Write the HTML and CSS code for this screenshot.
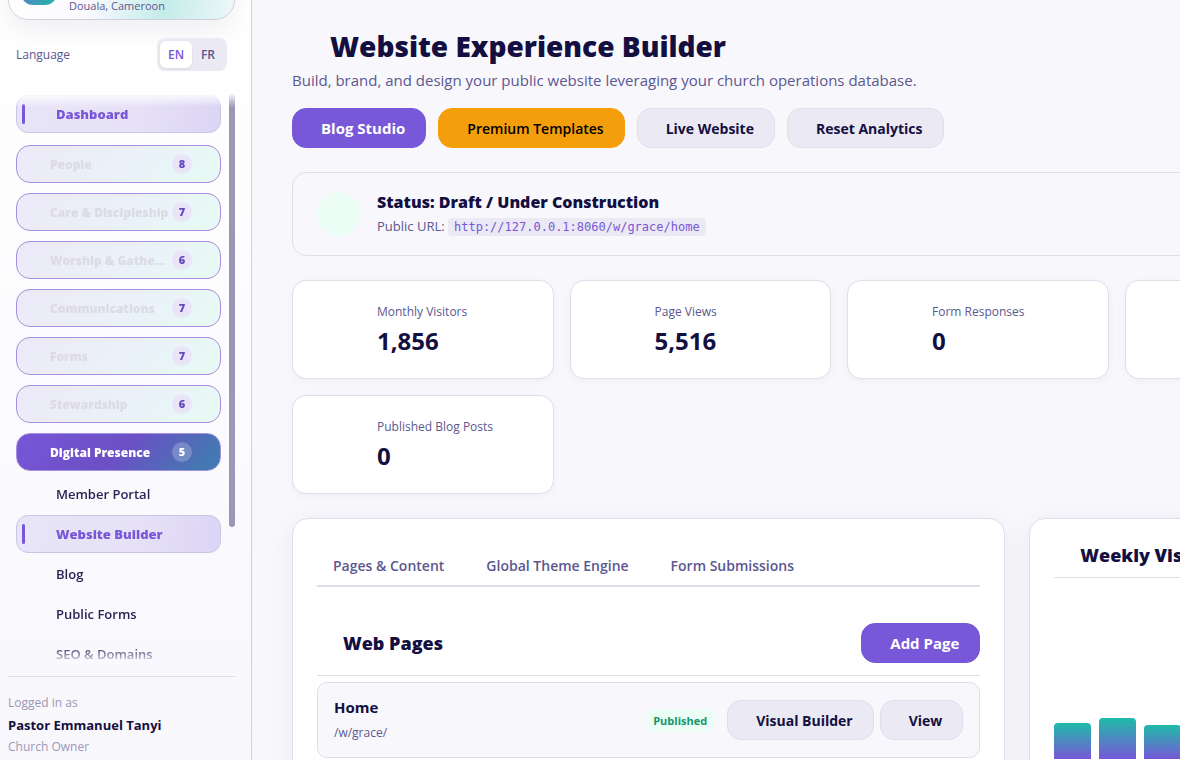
FILE: index.html
```html
<!DOCTYPE html>
<html lang="en">
<head>
    <meta charset="UTF-8">
    <meta name="viewport" content="width=device-width, initial-scale=1.0">
    <title>Website Experience Builder</title>
    <link rel="stylesheet" href="styles.css">
</head>
<body>

    <div class="app">
        <aside class="sidebar">
            <div class="brand-card">
                <div class="brand-logo"></div>
                <div class="brand-place">Douala, Cameroon</div>
            </div>

            <div class="language-row">
                <span>Language</span>
                <div class="language-toggle">
                    <button type="button" class="active">EN</button>
                    <button type="button">FR</button>
                </div>
            </div>

            <nav class="side-nav">
                <a href="#" class="nav-link active first">Dashboard</a>
                <button type="button" class="nav-group"><span class="nav-label">People</span><span class="count">8</span></button>
                <button type="button" class="nav-group"><span class="nav-label">Care &amp; Discipleship</span><span class="count">7</span></button>
                <button type="button" class="nav-group"><span class="nav-label">Worship &amp; Gathe...</span><span class="count">6</span></button>
                <button type="button" class="nav-group"><span class="nav-label">Communications</span><span class="count">7</span></button>
                <button type="button" class="nav-group"><span class="nav-label">Forms</span><span class="count">7</span></button>
                <button type="button" class="nav-group"><span class="nav-label">Stewardship</span><span class="count">6</span></button>
                <button type="button" class="nav-group open"><span class="nav-label">Digital Presence</span><span class="count">5</span></button>
                <div class="sub-nav">
                    <a href="#" class="nav-link">Member Portal</a>
                    <a href="#" class="nav-link active">Website Builder</a>
                    <a href="#" class="nav-link">Blog</a>
                    <a href="#" class="nav-link">Public Forms</a>
                    <a href="#" class="nav-link">SEO &amp; Domains</a>
                </div>
                <div class="scroll-thumb"></div>
            </nav>

            <div class="user-box">
                <div>Logged in as</div>
                <div class="user-name">Pastor Emmanuel Tanyi</div>
                <div>Church Owner</div>
            </div>
        </aside>

        <main class="content">
            <header class="page-header">
                <h1>Website Experience Builder</h1>
                <p>Build, brand, and design your public website leveraging your church operations database.</p>
            </header>

            <div class="actions">
                <button type="button" class="btn btn-primary">Blog Studio</button>
                <button type="button" class="btn btn-premium">Premium Templates</button>
                <button type="button" class="btn">Live Website</button>
                <button type="button" class="btn">Reset Analytics</button>
            </div>

            <section class="status-card">
                <div class="status-icon"></div>
                <div>
                    <h2>Status: Draft / Under Construction</h2>
                    <p>Public URL: <code>http://127.0.0.1:8060/w/grace/home</code></p>
                </div>
            </section>

            <section class="stats">
                <div class="stat-card">
                    <div class="stat-label">Monthly Visitors</div>
                    <div class="stat-value">1,856</div>
                </div>
                <div class="stat-card">
                    <div class="stat-label">Page Views</div>
                    <div class="stat-value">5,516</div>
                </div>
                <div class="stat-card">
                    <div class="stat-label">Form Responses</div>
                    <div class="stat-value">0</div>
                </div>
                <div class="stat-card"></div>
                <div class="stat-card">
                    <div class="stat-label">Published Blog Posts</div>
                    <div class="stat-value">0</div>
                </div>
            </section>

            <div class="panels">
                <section class="panel">
                    <div class="tabs">
                        <button type="button">Pages &amp; Content</button>
                        <button type="button">Global Theme Engine</button>
                        <button type="button">Form Submissions</button>
                    </div>
                    <div class="panel-header">
                        <h2>Web Pages</h2>
                        <button type="button" class="btn btn-primary">Add Page</button>
                    </div>
                    <div class="page-item">
                        <div class="page-info">
                            <h3>Home</h3>
                            <p>/w/grace/</p>
                        </div>
                        <span class="badge">Published</span>
                        <div class="page-actions">
                            <button type="button" class="btn">Visual Builder</button>
                            <button type="button" class="btn">View</button>
                        </div>
                    </div>
                </section>

                <section class="panel">
                    <h2 class="chart-title">Weekly Visitors</h2>
                    <div class="chart">
                        <div class="bar" style="height: 36px"></div>
                        <div class="bar" style="height: 41px"></div>
                        <div class="bar" style="height: 34px"></div>
                        <div class="bar" style="height: 48px"></div>
                        <div class="bar" style="height: 56px"></div>
                        <div class="bar" style="height: 72px"></div>
                        <div class="bar" style="height: 90px"></div>
                    </div>
                </section>
            </div>
        </main>
    </div>

</body>
</html>
```

FILE: styles.css
```css
* {
    box-sizing: border-box;
}
body {
    margin: 0;
    font-family: "Open Sans", "Noto Sans", sans-serif;
    background-color: #f8f7fc;
    color: #130f40;
    overflow: hidden;
}
h1, h2, h3, p {
    margin: 0;
}
button {
    font-family: inherit;
    cursor: pointer;
}
.app {
    display: flex;
    height: 100vh;
    overflow: hidden;
}

/* Sidebar */
.sidebar {
    display: flex;
    flex-direction: column;
    justify-content: flex-end;
    flex: none;
    width: 252px;
    padding: 0 16px 0 8px;
    border-right: 1px solid #d1cfdd;
    background: linear-gradient(180deg, #ffffff, #f8f7fc);
    overflow: hidden;
}
.brand-card {
    display: flex;
    flex: none;
    align-items: flex-end;
    gap: 12px;
    height: 80px;
    padding: 0 12px 5px;
    border: 1px solid #d1cfdd;
    border-radius: 20px;
    background: linear-gradient(100deg, #ffffff 0%, #faf9fe 38%, #c4ece9 70%, #e6f5f5 94%, #f2f9fa 100%);
    box-shadow: 0 12px 24px rgba(19, 15, 64, 0.06);
}
.brand-logo {
    width: 36px;
    height: 36px;
    margin-bottom: 9px;
    border-radius: 12px;
    background: linear-gradient(135deg, #7857d8, #1fbba9);
}
.brand-place {
    font-size: 11px;
    line-height: 16px;
    color: #5b5790;
}
.language-row {
    display: flex;
    flex: none;
    align-items: center;
    justify-content: space-between;
    padding: 18px 8px 22px;
    font-size: 12px;
    font-weight: 500;
    color: #5b5790;
}
.language-toggle {
    display: flex;
    padding: 3px;
    border-radius: 8px;
    background-color: #ebe9f3;
}
.language-toggle button {
    width: 32px;
    height: 27px;
    padding: 0;
    border: none;
    border-radius: 6px;
    background: none;
    font-size: 12px;
    font-weight: 600;
    color: #5b5790;
}
.language-toggle .active {
    background-color: #ffffff;
    color: #7857d8;
    box-shadow: 0 1px 3px rgba(19, 15, 64, 0.08);
}
.side-nav {
    position: relative;
    flex: none;
    height: calc(100vh - 189px);
    margin-bottom: 12px;
    padding: 2px 14px 0 8px;
    overflow: hidden;
    -webkit-mask-image: linear-gradient(180deg, transparent, #000 14px, #000 calc(100% - 18px), transparent);
    mask-image: linear-gradient(180deg, transparent, #000 14px, #000 calc(100% - 18px), transparent);
}
.scroll-thumb {
    position: absolute;
    top: 0;
    right: 0;
    width: 6px;
    height: 76%;
    border-radius: 3px;
    background-color: #9b97b7;
}
.nav-link {
    display: flex;
    align-items: center;
    height: 38px;
    padding-left: 39px;
    border: 1px solid transparent;
    border-radius: 12px;
    font-size: 13px;
    font-weight: 600;
    color: #2a2557;
    text-decoration: none;
}
.nav-link.active {
    padding-left: 5px;
    border-color: #cbc3e8;
    background: linear-gradient(100deg, #e9e5f8 0%, #e6e1f6 60%, #dbd4f5 100%);
    font-weight: 800;
    color: #7857d8;
}
.nav-link.active::before {
    content: "";
    width: 3px;
    height: 20px;
    margin-right: 31px;
    border-radius: 2px;
    background-color: #7857d8;
}
.nav-link.first {
    margin-bottom: 12px;
}
.nav-group {
    display: flex;
    align-items: center;
    width: 100%;
    height: 38px;
    margin-bottom: 10px;
    padding: 0 28px 0 33px;
    border: 1px solid #a48fe2;
    border-radius: 14px;
    background: linear-gradient(135deg, #ede9f8 0%, #eaf1f9 55%, #e8f9f5 90%);
    font-size: 12px;
    font-weight: 800;
    color: #dcdae6;
}
.nav-label {
    flex: 1;
    text-align: left;
    white-space: nowrap;
}
.count {
    flex: none;
    width: 20px;
    border-radius: 50%;
    background-color: #e9e4f8;
    font-size: 11px;
    line-height: 20px;
    text-align: center;
    color: #6548bd;
}
.nav-group.open {
    margin-bottom: 4px;
    background: linear-gradient(135deg, #7857d8 0%, #6c4fc5 50%, #4478b2 90%);
    color: #ffffff;
}
.nav-group.open .count {
    background-color: rgba(255, 255, 255, 0.22);
    color: #ffffff;
}
.sub-nav {
    display: flex;
    flex-direction: column;
    gap: 2px;
}
.user-box {
    flex: none;
    padding: 15px 0 2px;
    border-top: 1px solid #e0dee9;
    font-size: 12px;
    line-height: 22px;
    color: #9b97b7;
}
.user-name {
    font-size: 13px;
    font-weight: 700;
    color: #130f40;
}

/* Content */
.content {
    flex: 1;
    min-width: 1174px;
    padding: 27px 40px 0;
}
.page-header h1 {
    padding-left: 38px;
    font-size: 28px;
    font-weight: 800;
    line-height: 38px;
}
.page-header p {
    font-size: 15px;
    line-height: 30px;
    color: #5b5790;
}
.actions {
    display: flex;
    gap: 12px;
    margin: 13px 0 24px;
}
.btn {
    height: 40px;
    padding: 0 20px 0 28px;
    border: 1px solid #e0dee9;
    border-radius: 14px;
    background-color: #ebe9f3;
    font-size: 14px;
    font-weight: 700;
    color: #130f40;
    white-space: nowrap;
}
.btn-primary {
    border-color: #7857d8;
    background-color: #7857d8;
    font-size: 15px;
    color: #ffffff;
}
.btn-premium {
    border-color: #f59e0b;
    background-color: #f59e0b;
    font-weight: 600;
    color: #000000;
}
.status-card {
    display: flex;
    align-items: center;
    gap: 16px;
    height: 84px;
    margin-bottom: 24px;
    padding: 0 24px;
    border: 1px solid #e0dee9;
    border-radius: 14px;
}
.status-icon {
    width: 44px;
    height: 44px;
    border-radius: 50%;
    background-color: #ebfdf5;
}
.status-card h2 {
    font-size: 16px;
    font-weight: 800;
    line-height: 24px;
}
.status-card p {
    font-size: 13px;
    line-height: 24px;
    color: #5b5790;
}
.status-card code {
    padding: 2px 6px;
    border-radius: 4px;
    background-color: #ebe9f3;
    font-family: "DejaVu Sans Mono", monospace;
    font-size: 12px;
    color: #7857d8;
}
.stats {
    display: grid;
    grid-template-columns: repeat(4, 1fr);
    gap: 16px;
    margin-bottom: 24px;
}
.stat-card {
    min-height: 99px;
    padding: 20px 24px 0 84px;
    border: 1px solid #e0dee9;
    border-radius: 14px;
    background-color: #ffffff;
    box-shadow: 0 2px 8px rgba(19, 15, 64, 0.04);
}
.stat-label {
    font-size: 12px;
    line-height: 21px;
    color: #5b5790;
}
.stat-value {
    font-size: 24px;
    font-weight: 700;
    line-height: 37px;
}
.panels {
    display: grid;
    grid-template-columns: 2fr 1fr;
    gap: 24px;
}
.panel {
    min-height: 400px;
    padding: 24px;
    border: 1px solid #e0dee9;
    border-radius: 16px;
    background-color: #ffffff;
    box-shadow: 0 4px 24px rgba(19, 15, 64, 0.06);
}
.tabs {
    display: flex;
    gap: 10px;
    margin-bottom: 24px;
    border-bottom: 2px solid #e0dee9;
}
.tabs button {
    height: 42px;
    padding: 2px 16px 0;
    border: none;
    background: none;
    font-size: 14px;
    font-weight: 600;
    color: #5b5790;
}
.panel h2 {
    padding-left: 26px;
    font-size: 18px;
    font-weight: 800;
    line-height: 24px;
}
.panel-header {
    display: flex;
    align-items: center;
    justify-content: space-between;
    margin-bottom: 6px;
    padding: 12px 0;
    border-bottom: 1px solid #e0dee9;
}
.page-item {
    display: flex;
    align-items: center;
    gap: 12px;
    height: 76px;
    padding: 0 16px;
    border: 1px solid #e0dee9;
    border-radius: 10px;
    background-color: #f8f7fc;
}
.page-info {
    flex: 1;
}
.page-info h3 {
    font-size: 15px;
    font-weight: 700;
    line-height: 26px;
}
.page-info p {
    font-size: 12px;
    line-height: 26px;
    color: #5b5790;
}
.page-actions {
    display: flex;
    gap: 6px;
}
.badge {
    padding: 0 8px;
    border-radius: 12px;
    background-color: #ebfdf5;
    font-size: 11px;
    font-weight: 700;
    line-height: 23px;
    color: #149669;
}
.panel .chart-title {
    padding-bottom: 10px;
    border-bottom: 1px solid #e0dee9;
}
.chart {
    display: flex;
    align-items: flex-end;
    gap: 8px;
    height: 181px;
}
.bar {
    flex: 1;
    border-radius: 4px 4px 0 0;
    background: linear-gradient(180deg, #1fbba9, #7857d8);
}
```
